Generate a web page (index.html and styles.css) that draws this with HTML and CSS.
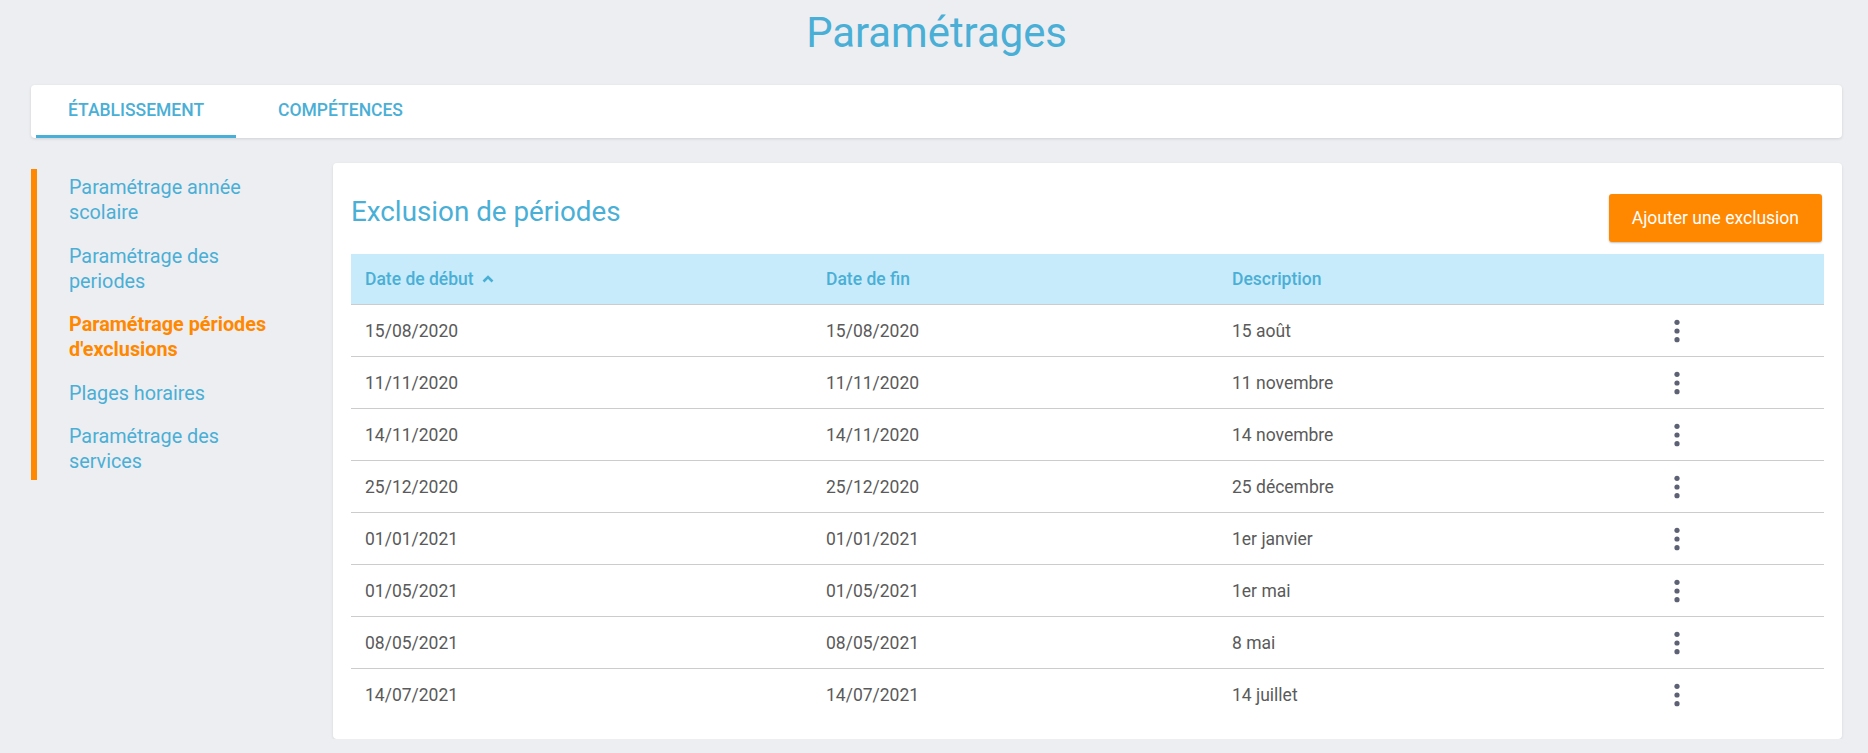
FILE: index.html
```html
<!DOCTYPE html>
<html lang="fr">
<head>
<meta charset="utf-8">
<title>Paramétrages</title>
<link rel="stylesheet" href="styles.css">
</head>
<body>
<div class="page">
  <h1 class="page-title">Paramétrages</h1>
  <nav class="tabs-card">
    <a class="tab active">Établissement</a>
    <a class="tab">Compétences</a>
  </nav>
  <div class="content">
    <aside class="sidenav">
      <a class="nav-item">Paramétrage année scolaire</a>
      <a class="nav-item">Paramétrage des periodes</a>
      <a class="nav-item active">Paramétrage périodes d'exclusions</a>
      <a class="nav-item">Plages horaires</a>
      <a class="nav-item">Paramétrage des services</a>
    </aside>
    <section class="card">
      <div class="card-head">
        <h2 class="card-title">Exclusion de périodes</h2>
        <button class="btn">Ajouter une exclusion</button>
      </div>
      <table class="grid">
        <colgroup>
          <col class="c1"><col class="c2"><col class="c3"><col>
        </colgroup>
        <thead>
          <tr>
            <th>Date de début <svg class="sort" width="12" height="8" viewBox="0 0 12 8"><polyline points="1.5,6.5 6,2 10.5,6.5" fill="none" stroke="#4aafd6" stroke-width="2.6"/></svg></th>
            <th>Date de fin</th>
            <th>Description</th>
            <th></th>
          </tr>
        </thead>
        <tbody>
          <tr><td>15/08/2020</td><td>15/08/2020</td><td>15 août</td><td><svg class="kebab" width="26" height="26" viewBox="0 0 26 26"><circle cx="13" cy="4.3" r="2.6"/><circle cx="13" cy="13" r="2.6"/><circle cx="13" cy="21.7" r="2.6"/></svg></td></tr>
          <tr><td>11/11/2020</td><td>11/11/2020</td><td>11 novembre</td><td><svg class="kebab" width="26" height="26" viewBox="0 0 26 26"><circle cx="13" cy="4.3" r="2.6"/><circle cx="13" cy="13" r="2.6"/><circle cx="13" cy="21.7" r="2.6"/></svg></td></tr>
          <tr><td>14/11/2020</td><td>14/11/2020</td><td>14 novembre</td><td><svg class="kebab" width="26" height="26" viewBox="0 0 26 26"><circle cx="13" cy="4.3" r="2.6"/><circle cx="13" cy="13" r="2.6"/><circle cx="13" cy="21.7" r="2.6"/></svg></td></tr>
          <tr><td>25/12/2020</td><td>25/12/2020</td><td>25 décembre</td><td><svg class="kebab" width="26" height="26" viewBox="0 0 26 26"><circle cx="13" cy="4.3" r="2.6"/><circle cx="13" cy="13" r="2.6"/><circle cx="13" cy="21.7" r="2.6"/></svg></td></tr>
          <tr><td>01/01/2021</td><td>01/01/2021</td><td>1er janvier</td><td><svg class="kebab" width="26" height="26" viewBox="0 0 26 26"><circle cx="13" cy="4.3" r="2.6"/><circle cx="13" cy="13" r="2.6"/><circle cx="13" cy="21.7" r="2.6"/></svg></td></tr>
          <tr><td>01/05/2021</td><td>01/05/2021</td><td>1er mai</td><td><svg class="kebab" width="26" height="26" viewBox="0 0 26 26"><circle cx="13" cy="4.3" r="2.6"/><circle cx="13" cy="13" r="2.6"/><circle cx="13" cy="21.7" r="2.6"/></svg></td></tr>
          <tr><td>08/05/2021</td><td>08/05/2021</td><td>8 mai</td><td><svg class="kebab" width="26" height="26" viewBox="0 0 26 26"><circle cx="13" cy="4.3" r="2.6"/><circle cx="13" cy="13" r="2.6"/><circle cx="13" cy="21.7" r="2.6"/></svg></td></tr>
          <tr><td>14/07/2021</td><td>14/07/2021</td><td>14 juillet</td><td><svg class="kebab" width="26" height="26" viewBox="0 0 26 26"><circle cx="13" cy="4.3" r="2.6"/><circle cx="13" cy="13" r="2.6"/><circle cx="13" cy="21.7" r="2.6"/></svg></td></tr>
        </tbody>
      </table>
    </section>
  </div>
</div>
</body>
</html>
```
FILE: styles.css
```css
html, body {
  margin: 0;
  background: #edeef1;
  font-family: Roboto, "Noto Sans", Arial, sans-serif;
}

.page {
  padding: 8px 26px 0 31px;
}

.page-title {
  margin: 0 0 28px;
  text-align: center;
  font-size: 41.8px;
  font-weight: 400;
  line-height: 49px;
  color: #4aafd6;
}

.tabs-card {
  display: flex;
  height: 53px;
  background: #fff;
  border-radius: 4px;
  box-shadow: 0 1px 3px rgba(0, 0, 0, 0.12);
}

.tab {
  display: block;
  box-sizing: border-box;
  height: 53px;
  margin: 0 5px;
  padding: 15px 32px 0;
  font-size: 17.5px;
  font-weight: 500;
  line-height: 20.5px;
  text-transform: uppercase;
  color: #4aafd6;
  border-bottom: 3px solid transparent;
}

.tab.active {
  border-bottom-color: #4aafd6;
}

.content {
  display: flex;
  align-items: flex-start;
  gap: 49px;
  margin-top: 25px;
}

.sidenav {
  flex: none;
  width: 253px;
  box-sizing: border-box;
  margin-top: 6px;
  padding: 6px 0 6px 32px;
  border-left: 6px solid #ff8800;
}

.nav-item {
  display: block;
  margin-bottom: 18.5px;
  font-size: 19.8px;
  line-height: 25px;
  color: #4aafd6;
}

.nav-item:last-child {
  margin-bottom: 0;
}

.nav-item.active {
  color: #ff8800;
  font-weight: 700;
}

.card {
  flex: 1;
  background: #fff;
  border-radius: 4px;
  box-shadow: 0 1px 3px rgba(0, 0, 0, 0.1);
  padding: 31px 18px 18px;
}

.card-head {
  display: flex;
  justify-content: space-between;
  align-items: flex-start;
  margin-bottom: 12px;
}

.card-title {
  margin: 2px 0 0;
  font-size: 27.8px;
  font-weight: 400;
  line-height: 32.6px;
  color: #4aafd6;
}

.btn {
  height: 47.5px;
  margin-right: 2px;
  padding: 0 23px;
  border: 0;
  border-radius: 3px;
  background: #ff8800;
  color: #fff;
  font-family: Roboto, "Noto Sans", Arial, sans-serif;
  font-size: 17.5px;
  font-weight: 400;
  box-shadow: 0 1px 2px rgba(0, 0, 0, 0.25);
}

.grid {
  width: 100%;
  border-collapse: collapse;
  font-size: 17.5px;
}

.grid .c1 { width: 461px; }
.grid .c2 { width: 406px; }
.grid .c3 { width: 432px; }

.grid th {
  height: 50.5px;
  padding: 0 14px;
  text-align: left;
  font-weight: 500;
  color: #4aafd6;
  background: #c7ebfa;
  border-bottom: 1px solid #cccccc;
}

.grid td {
  height: 51px;
  padding: 0 14px;
  color: #5a5a5a;
  border-bottom: 1px solid #cccccc;
}

.grid tbody tr:last-child td {
  height: 52px;
  border-bottom: 0;
}

.sort {
  margin-left: 4px;
  vertical-align: 2px;
}

.kebab {
  display: block;
  fill: #5c6173;
}
```
